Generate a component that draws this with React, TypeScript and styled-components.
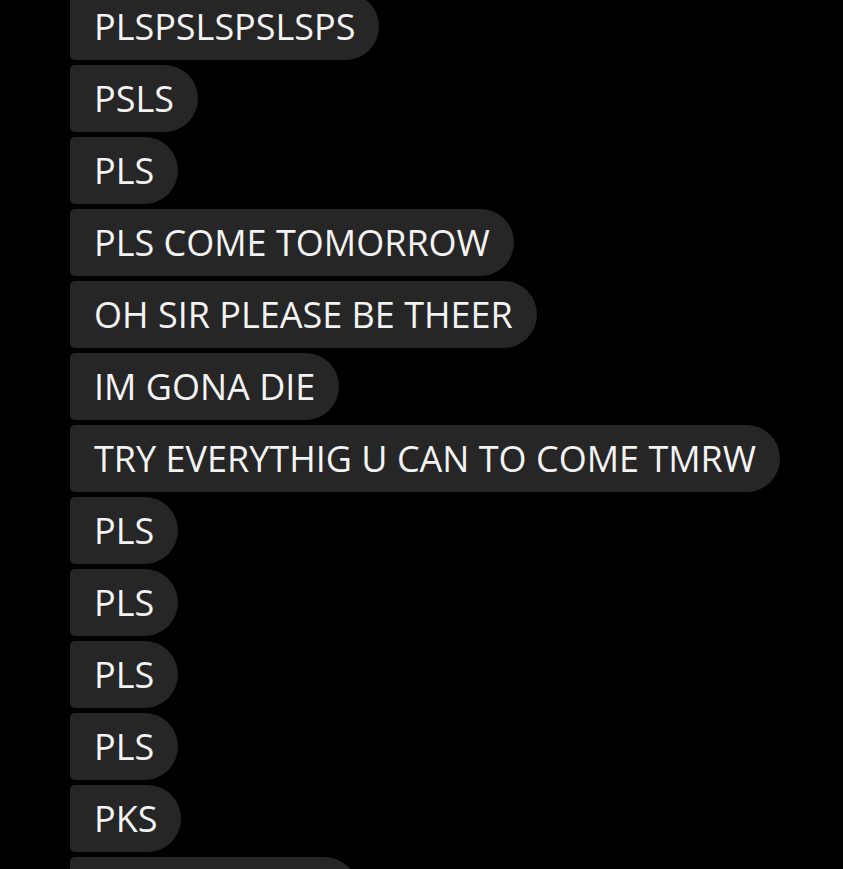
import styled, { createGlobalStyle } from "styled-components";

const Global = createGlobalStyle`
  html, body {
    margin: 0;
    background: #000;
    overflow: hidden;
  }
`;

const Screen = styled.div`
  height: 100vh;
  overflow: hidden;
`;

const Thread = styled.div`
  display: flex;
  flex-direction: column;
  align-items: flex-start;
  gap: 5px;
  margin-top: -7px;
  padding-left: 70px;
  font-family: "Open Sans", "Noto Sans", sans-serif;
`;

const Bubble = styled.div<{ $width?: number }>`
  box-sizing: border-box;
  height: 67px;
  flex-shrink: 0;
  display: flex;
  align-items: center;
  padding: 0 24px;
  background: #262626;
  color: #f3f3f3;
  font-size: 36px;
  white-space: nowrap;
  border-radius: 5px 34px 34px 5px;
  ${(p) => (p.$width ? `width: ${p.$width}px;` : "")}
`;

const messages = [
  "PLSPSLSPSLSPS",
  "PSLS",
  "PLS",
  "PLS COME TOMORROW",
  "OH SIR PLEASE BE THEER",
  "IM GONA DIE",
  "TRY EVERYTHIG U CAN TO COME TMRW",
  "PLS",
  "PLS",
  "PLS",
  "PLS",
  "PKS",
];

export default function App() {
  return (
    <Screen>
      <Global />
      <Thread>
        {messages.map((m, i) => (
          <Bubble key={i}>{m}</Bubble>
        ))}
        {/* next message, only its top edge is in view */}
        <Bubble $width={288} />
      </Thread>
    </Screen>
  );
}
